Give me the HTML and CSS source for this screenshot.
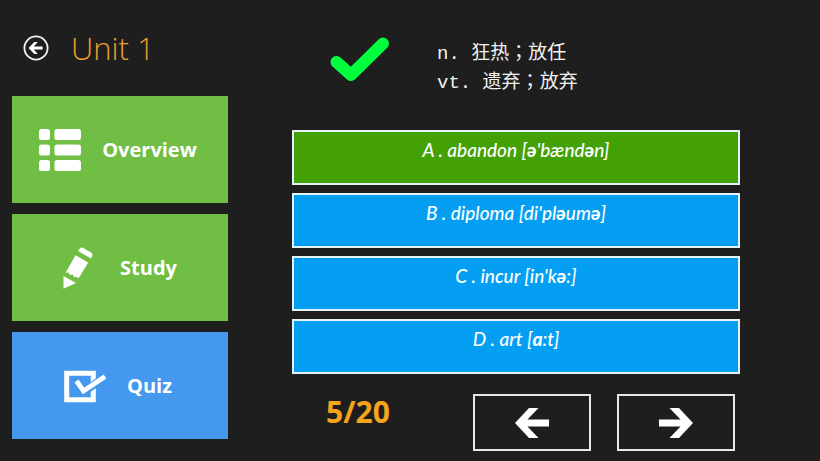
FILE: index.html
```html
<!DOCTYPE html>
<html lang="en">
<head>
<meta charset="utf-8">
<meta name="viewport" content="width=device-width, initial-scale=1">
<title>Unit 1 Quiz</title>
<link rel="stylesheet" href="styles.css">
</head>
<body>
<div class="page">
  <aside class="side">
    <header class="head">
      <button class="back" type="button" aria-label="Back">
        <svg viewBox="0 0 26 26" width="26" height="26" aria-hidden="true">
          <circle cx="13" cy="13" r="11.6" fill="none" stroke="#f2f2f2" stroke-width="1.8"/>
          <path d="M5.6 13 11.2 7H14.8L10.8 11.4H19.6V14.6H10.8L14.8 19H11.2Z" fill="#fff"/>
        </svg>
      </button>
      <h1 class="title">Unit 1</h1>
    </header>
    <nav class="tiles">
      <a class="tile" href="#overview">
        <svg viewBox="0 0 42 42" width="42" height="42" fill="#fff" aria-hidden="true">
          <rect x="0" y="0" width="11" height="11" rx="2.6"/><rect x="15.500" y="0" width="26.500" height="11" rx="2.6"/>
          <rect x="0" y="15.500" width="11" height="11" rx="2.6"/><rect x="15.500" y="15.500" width="26.500" height="11" rx="2.6"/>
          <rect x="0" y="31" width="11" height="11" rx="2.6"/><rect x="15.500" y="31" width="26.500" height="11" rx="2.6"/>
        </svg>
        <span>Overview</span>
      </a>
      <a class="tile tile-study" href="#study">
        <svg viewBox="0 0 30 42" width="30" height="42" fill="#fff" aria-hidden="true">
          <path d="M15.200 4 16.800 1.400Q18 0 19.800 .8L28 5.400Q29.800 6.800 29.400 8.600L28 11.600Z"/>
          <path d="M12.500 8.200 25.200 15.500 15.500 31.500 13.200 29.600 11.500 30.400 9.400 27.400 7 28 5.500 25.600 2.600 25.800Z"/>
          <path d="M.5 29 13 36 .5 41.800Z"/>
        </svg>
        <span>Study</span>
      </a>
      <a class="tile tile-quiz" href="#quiz" aria-current="page">
        <svg viewBox="0 0 42 34" width="42" height="34" aria-hidden="true">
          <path d="M2.700 4.200H29.300V30.800H2.700Z" fill="none" stroke="#fff" stroke-width="5"/>
          <path d="M12.500 13 20 22.500 41 8" fill="none" stroke="#4499ee" stroke-width="8"/>
          <path d="M12.500 12 19.500 22 41 7.500" fill="none" stroke="#fff" stroke-width="4.800"/>
        </svg>
        <span>Quiz</span>
      </a>
    </nav>
  </aside>

  <main class="main">
    <section class="question">
      <svg class="tick" viewBox="0 0 60 46" width="60" height="46" role="img" aria-label="Correct">
        <path d="M6.500 25 21 38 53 6.500" fill="none" stroke="#00ff3c" stroke-width="12" stroke-linecap="round" stroke-linejoin="round"/>
      </svg>
      <p class="meaning" lang="zh-CN">n. 狂热<span class="sep" lang="zh-TW">；</span>放任<br>vt. 遗弃<span class="sep" lang="zh-TW">；</span>放弃</p>
    </section>
    <div class="options">
      <button class="option option-correct" type="button">A . abandon [<b>ə</b>'bænd<b>ə</b>n]</button>
      <button class="option" type="button">B . diploma [di'pl<b>ə</b>um<b>ə</b>]</button>
      <button class="option" type="button">C . incur [in'k<b>ə</b>:]</button>
      <button class="option" type="button">D . art [<b>ɑ</b>:t]</button>
    </div>
    <footer class="pager">
      <output class="count">5/20</output>
      <button class="step" type="button" aria-label="Previous">
        <svg viewBox="0 0 34 30" width="34" height="30" aria-hidden="true"><path d="M0 15 14 0H23.500L12.500 11.500H34V18.500H12.500L23.500 30H14Z" fill="#fff"/></svg>
      </button>
      <button class="step" type="button" aria-label="Next">
        <svg viewBox="0 0 34 30" width="34" height="30" aria-hidden="true"><path d="M34 15 20 0H10.500L21.500 11.500H0V18.500H21.500L10.500 30H20Z" fill="#fff"/></svg>
      </button>
    </footer>
  </main>
</div>
</body>
</html>
```
FILE: styles.css
```css
* {
  box-sizing: border-box;
}

body {
  margin: 0;
  background: #1e1e1e;
  color: #fff;
  font-family: "Open Sans", "Noto Sans", sans-serif;
}

button {
  margin: 0;
  padding: 0;
  border: 0;
  background: none;
  color: inherit;
  font: inherit;
  cursor: pointer;
}

svg {
  display: block;
  flex: none;
}

.page {
  display: grid;
  grid-template-columns: 216fr 448fr;
  gap: 64px;
  padding: 0 80px 0 12px;
}

.head {
  display: flex;
  align-items: center;
  gap: 22px;
  height: 96px;
  padding-left: 11px;
}

.title {
  margin: 0;
  color: #e8a030;
  font-size: 31px;
  font-weight: 300;
  line-height: 40px;
}

.tiles {
  display: grid;
  gap: 11px;
}

.tile {
  display: flex;
  align-items: center;
  justify-content: center;
  gap: 21px;
  height: 107px;
  padding-right: 4px;
  background: #70be44;
  color: #fff;
  font-size: 20px;
  font-weight: 700;
  text-decoration: none;
}

.tile-study {
  gap: 27px;
  padding-right: 0;
}

.tile-quiz {
  background: #4499ee;
}

.question {
  display: flex;
  align-items: center;
  gap: 47px;
  height: 130px;
  padding: 0 0 10px 38px;
}

.meaning {
  margin: 18px 0 0;
  color: #f2f2f2;
  font-family: "Liberation Mono", "Noto Sans CJK SC", monospace;
  font-size: 19px;
  line-height: 29px;
}

.sep {
  font-family: "Noto Sans CJK TC", sans-serif;
  line-height: 0;
}

.options {
  display: grid;
  gap: 8px;
}

.option {
  display: block;
  height: 55px;
  padding-bottom: 16px;
  border: 2px solid #e4f4fa;
  background: #049ff2;
  font-family: Lato, "Open Sans", sans-serif;
  font-size: 19px;
  font-style: italic;
  font-weight: 500;
  line-height: 24px;
}

.option b {
  font-weight: 900;
}

.option-correct {
  background: #43a005;
}

.pager {
  display: flex;
  gap: 26px;
  padding: 20px 5px 10px 34px;
}

.count {
  flex: 1;
  color: #f5a41c;
  font-size: 30px;
  font-weight: 700;
  line-height: 36px;
}

.step {
  display: grid;
  place-items: center;
  width: 118px;
  height: 57px;
  border: 2px solid #e8e8e8;
}
```
